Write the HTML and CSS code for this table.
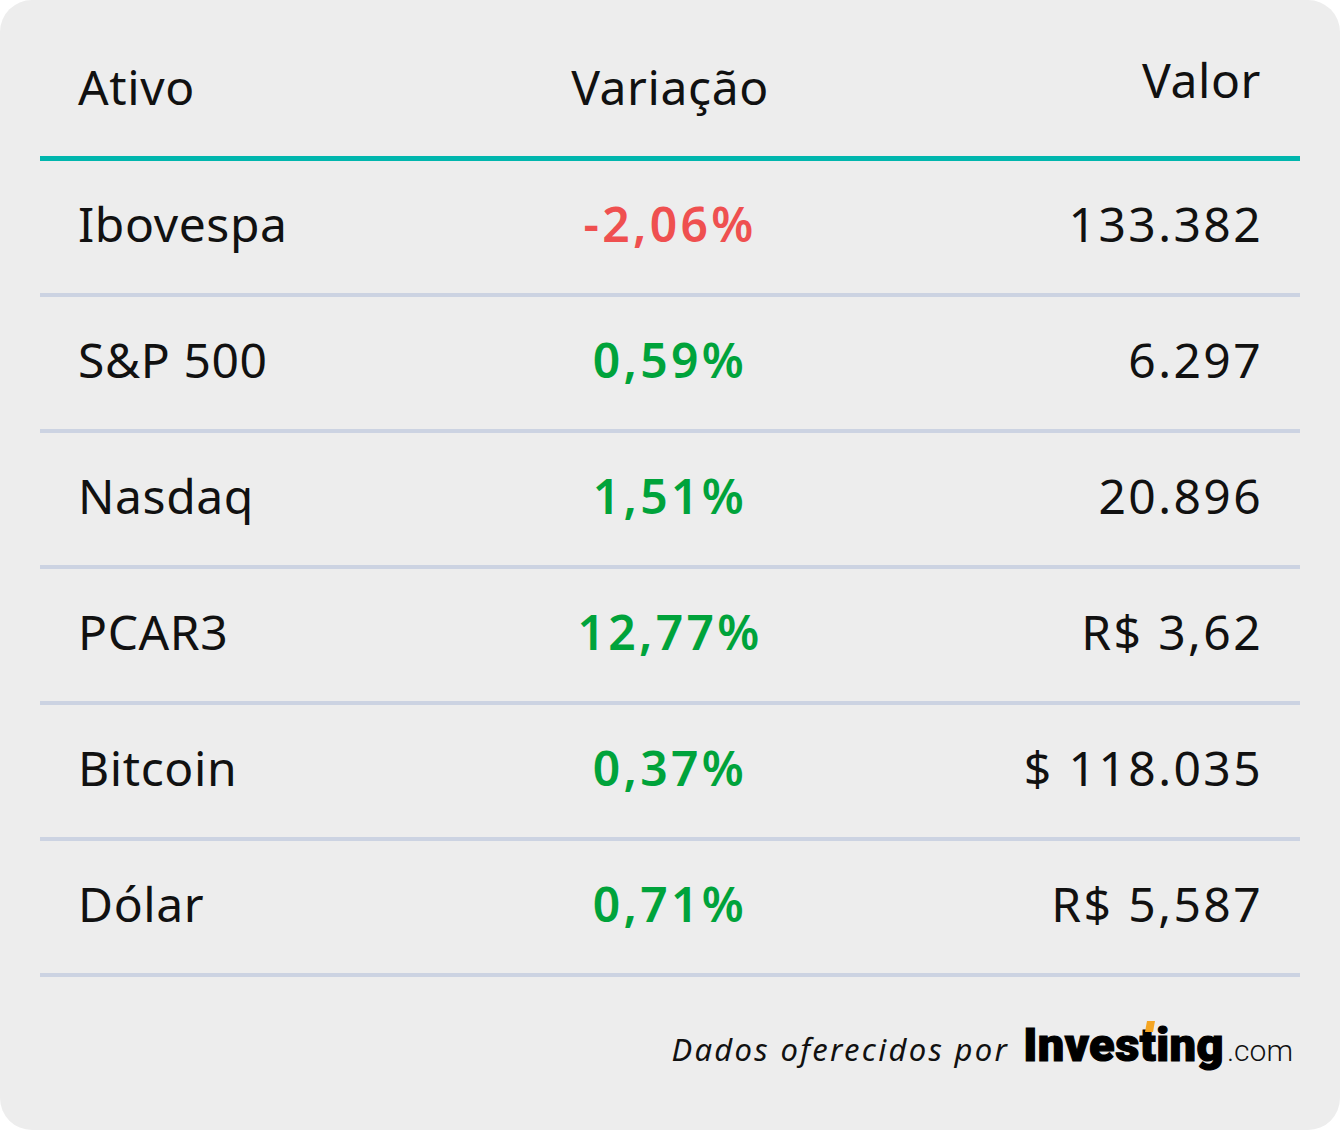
FILE: index.html
```html
<!DOCTYPE html>
<html lang="pt-BR">
<head>
<meta charset="utf-8">
<title>Mercados</title>
<link rel="stylesheet" href="styles.css">
</head>
<body>
<div class="card">
  <div class="table">
    <div class="row head">
      <div class="c left">Ativo</div>
      <div class="c mid">Variação</div>
      <div class="c right up">Valor</div>
    </div>
    <div class="row">
      <div class="c left">Ibovespa</div>
      <div class="c mid neg">-2,06%</div>
      <div class="c right">133.382</div>
    </div>
    <div class="row">
      <div class="c left">S&amp;P 500</div>
      <div class="c mid pos">0,59%</div>
      <div class="c right">6.297</div>
    </div>
    <div class="row">
      <div class="c left">Nasdaq</div>
      <div class="c mid pos">1,51%</div>
      <div class="c right">20.896</div>
    </div>
    <div class="row">
      <div class="c left">PCAR3</div>
      <div class="c mid pos">12,77%</div>
      <div class="c right">R$ 3,62</div>
    </div>
    <div class="row">
      <div class="c left">Bitcoin</div>
      <div class="c mid pos">0,37%</div>
      <div class="c right">$ 118.035</div>
    </div>
    <div class="row">
      <div class="c left">Dólar</div>
      <div class="c mid pos">0,71%</div>
      <div class="c right">R$ 5,587</div>
    </div>
  </div>
  <div class="footer">
    <span class="credit">Dados oferecidos por</span>
    <span class="logo"><span class="brand">Inves<span class="t">t</span>ing</span><span class="dotcom">.com</span></span>
  </div>
</div>
</body>
</html>
```
FILE: styles.css
```css
html, body {
  margin: 0;
  padding: 0;
  background: #ffffff;
}
.card {
  width: 1340px;
  height: 1130px;
  box-sizing: border-box;
  background: #ededed;
  border-radius: 32px;
  padding: 0 40px;
  font-family: "Noto Sans", "DejaVu Sans", sans-serif;
  color: #111111;
}
.table {
  display: flex;
  flex-direction: column;
}
.row {
  display: grid;
  grid-template-columns: 1fr 1fr 1fr;
  align-items: center;
  height: 125px;
  padding-bottom: 7px;
  border-bottom: 4px solid #ccd3e2;
  font-size: 48px;
  line-height: 48px;
  letter-spacing: 0.6px;
}
.row.head {
  height: 156px;
  padding-bottom: 0;
  align-items: start;
  border-bottom: 5px solid #00b6ad;
}
.head .c {
  padding-top: 63px;
}
.head .c.up {
  padding-top: 56px;
}
.c.left {
  text-align: left;
  padding-left: 38px;
}
.c.mid {
  text-align: center;
}
.c.right {
  text-align: right;
  padding-right: 37px;
  letter-spacing: 2.4px;
}
.head .c.right {
  letter-spacing: 0.6px;
  padding-right: 39px;
}
.neg {
  color: #ef5050;
  font-weight: 600;
  letter-spacing: 3.3px;
}
.pos {
  color: #00a33b;
  font-weight: 600;
  letter-spacing: 3.3px;
}
.footer {
  display: flex;
  justify-content: flex-end;
  align-items: baseline;
  gap: 14px;
  padding-top: 40px;
  padding-right: 7px;
}
.credit {
  font-style: italic;
  font-size: 31px;
  letter-spacing: 2.3px;
  color: #111111;
}
.logo {
  display: inline-flex;
  align-items: baseline;
  font-family: "Roboto", "Liberation Sans", sans-serif;
}
.brand {
  font-size: 47px;
  font-weight: 900;
  letter-spacing: 0.4px;
  color: #000000;
  -webkit-text-stroke: 1.2px #000000;
}
.t {
  position: relative;
}
.t::before {
  content: "";
  position: absolute;
  left: 6px;
  top: 4px;
  width: 8px;
  height: 11px;
  background: #f5a623;
  transform: skewX(-10deg);
}
.dotcom {
  font-size: 30px;
  font-weight: 300;
  color: #111111;
  margin-left: 3px;
}
```
